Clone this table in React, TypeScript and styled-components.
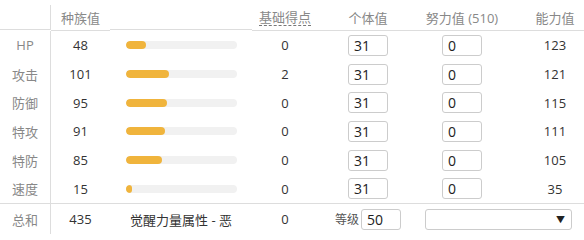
import React, {FC} from 'react';
import styled, {createGlobalStyle} from 'styled-components';

type Stat = {
  name: string;
  base: number;
  points: number;
  iv: number;
  ev: number;
  value: number;
};

const STATS: Stat[] = [
  {name: 'HP', base: 48, points: 0, iv: 31, ev: 0, value: 123},
  {name: '攻击', base: 101, points: 2, iv: 31, ev: 0, value: 121},
  {name: '防御', base: 95, points: 0, iv: 31, ev: 0, value: 115},
  {name: '特攻', base: 91, points: 0, iv: 31, ev: 0, value: 111},
  {name: '特防', base: 85, points: 0, iv: 31, ev: 0, value: 105},
  {name: '速度', base: 15, points: 0, iv: 31, ev: 0, value: 35},
];

const MAX_BASE = 255;

const GlobalStyle = createGlobalStyle`
  body {
    margin: 0;
    background: #fff;
    font-family: "Open Sans", "Noto Sans CJK SC", sans-serif;
    color: #333;
  }
`;

export default function App() {
  const total = STATS.reduce((sum, s) => sum + s.base, 0);
  return (
    <>
      <GlobalStyle />
      <Table>
        <HeadRow>
          <LabelCell />
          <HeadCell>种族值</HeadCell>
          <Cell />
          <HeadCell>
            <Dotted>基础得点</Dotted>
          </HeadCell>
          <HeadCell>个体值</HeadCell>
          <HeadCell>努力值 (510)</HeadCell>
          <StatHead>能力值</StatHead>
        </HeadRow>
        {STATS.map(s => (
          <StatRow key={s.name} stat={s} />
        ))}
        <FootRow>
          <LabelCell>总和</LabelCell>
          <ValueCell>{total}</ValueCell>
          <ValueCell>觉醒力量属性 - 恶</ValueCell>
          <ValueCell>0</ValueCell>
          <ValueCell>
            <Level>
              <LevelLabel>等级</LevelLabel>
              <Input defaultValue="50" />
            </Level>
          </ValueCell>
          <SelectCell>
            <Select>
              <Arrow>▼</Arrow>
            </Select>
          </SelectCell>
        </FootRow>
      </Table>
    </>
  );
}

const StatRow: FC<{stat: Stat}> = ({stat}) => (
  <Row>
    <LabelCell>{stat.name}</LabelCell>
    <ValueCell>{stat.base}</ValueCell>
    <Cell>
      <Bar>
        <Fill style={{width: `${(stat.base / MAX_BASE) * 100}%`}} />
      </Bar>
    </Cell>
    <ValueCell>{stat.points}</ValueCell>
    <ValueCell>
      <Input defaultValue={String(stat.iv)} />
    </ValueCell>
    <ValueCell>
      <Input defaultValue={String(stat.ev)} />
    </ValueCell>
    <StatValue>{stat.value}</StatValue>
  </Row>
);

const Table = styled.div`
  width: 584px;
  padding-top: 5px;
  display: grid;
  grid-template-columns: 51px 59px 142px 66px 100px 88px 78px;
`;

const Row = styled.div`
  display: contents;

  & > div {
    height: 28.7px;
  }
`;

const HeadRow = styled(Row)`
  & > div {
    height: 24px;
    border-bottom: 1px solid #ddd;
  }
`;

const FootRow = styled(Row)`
  & > div {
    height: 30px;
    border-top: 1px solid #ddd;
  }
`;

const Cell = styled.div`
  display: flex;
  align-items: center;
  justify-content: center;
  font-size: 13px;
  white-space: nowrap;
`;

const LabelCell = styled(Cell)`
  border-right: 1px solid #ddd;
  color: #888;
`;

const HeadCell = styled(Cell)`
  color: #888;
  padding-bottom: 1px;
`;

const StatHead = styled(HeadCell)`
  padding-left: 20px;
`;

const ValueCell = styled(Cell)`
  color: #333;
`;

const StatValue = styled(ValueCell)`
  padding-left: 20px;
`;

const Dotted = styled.span`
  border-bottom: 1px dashed #777;
  line-height: 16px;
`;

const Bar = styled.div`
  width: 111px;
  height: 8px;
  border-radius: 4px;
  background: #f1f1f1;
  overflow: hidden;
`;

const Fill = styled.div`
  height: 100%;
  border-radius: 4px;
  background: #f0b43c;
`;

const Input = styled.input`
  box-sizing: border-box;
  width: 40px;
  height: 21px;
  padding: 0 5px;
  border: 1px solid #ccc;
  border-radius: 3px;
  font-family: "Open Sans", sans-serif;
  font-size: 14px;
  color: #222;
  background: #fff;
  outline: none;
`;

const Level = styled.div`
  display: flex;
  align-items: center;
  gap: 2px;
`;

const LevelLabel = styled.span`
  font-size: 12px;
  color: #555;
`;

const SelectCell = styled(Cell)`
  grid-column: span 2;
  justify-content: flex-start;
  padding-left: 7px;
`;

const Select = styled.div`
  box-sizing: border-box;
  width: 147px;
  height: 21px;
  border: 1px solid #ccc;
  border-radius: 3px;
  display: flex;
  align-items: center;
  justify-content: flex-end;
  padding-right: 6px;
`;

const Arrow = styled.span`
  font-size: 9px;
  color: #222;
`;
